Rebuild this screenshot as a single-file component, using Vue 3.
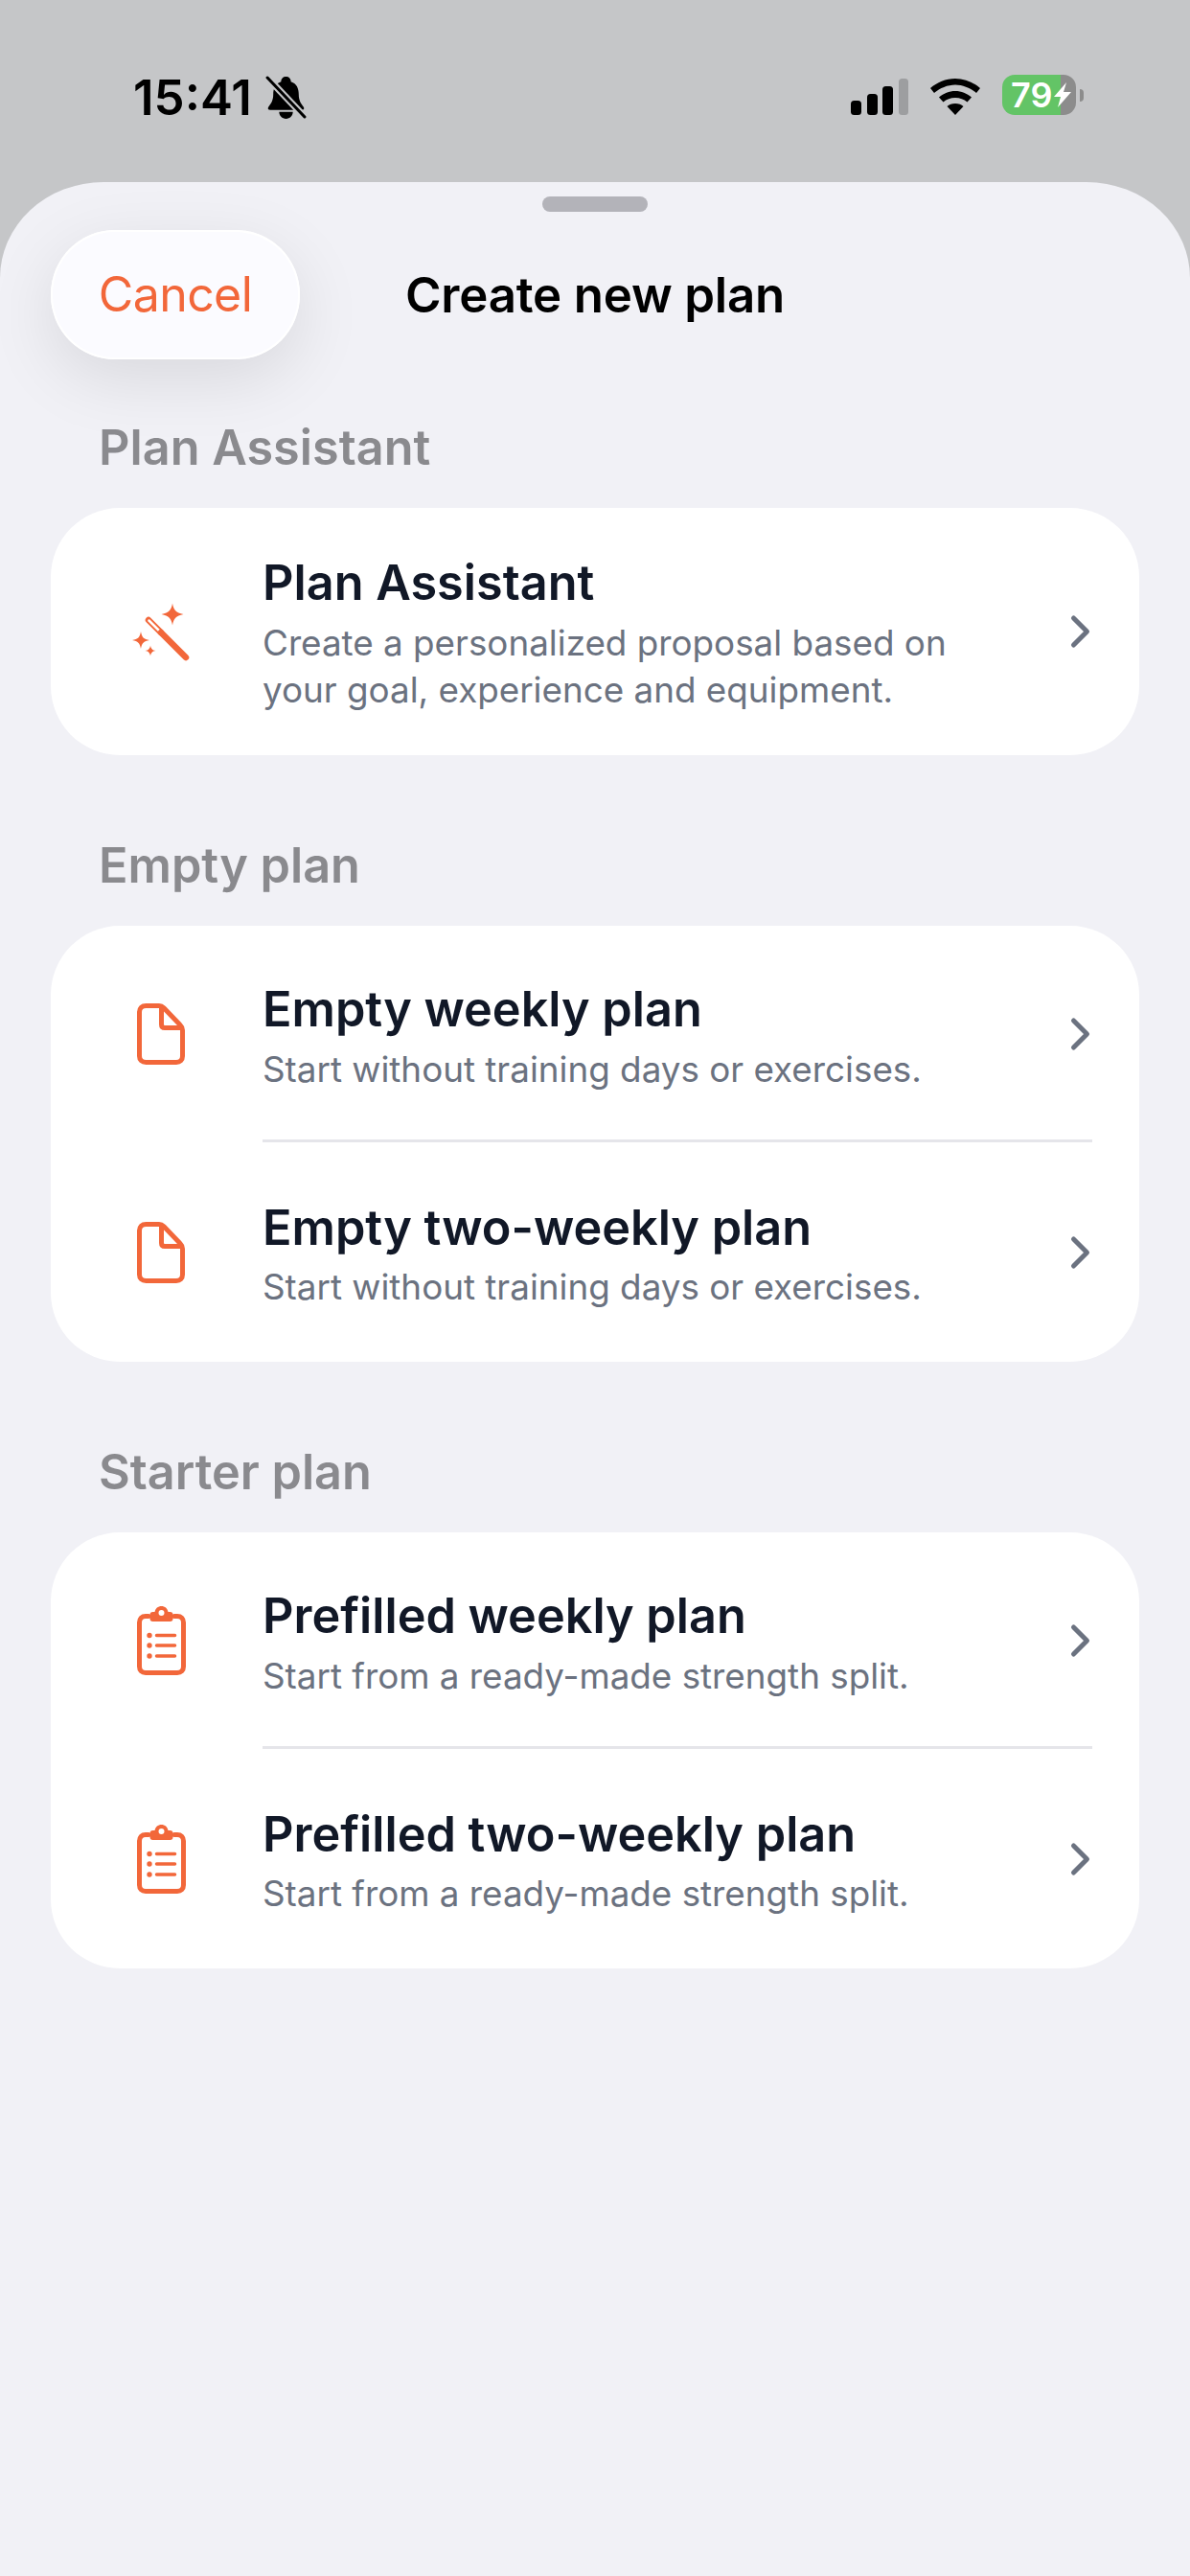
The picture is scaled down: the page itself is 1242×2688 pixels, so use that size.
<template>
  <div class="screen">
    <!-- status bar -->
    <div class="status-bar">
      <div class="status-left">
        <span class="time">15:41</span>
        <svg class="bell" width="43" height="45" viewBox="0 0 42 44">
          <path d="M21 1c3 0 5 2 5 5 6 2 8 7 8 13 0 6 2 9 5 13 1 2 0 3-2 3H5c-2 0-3-1-2-3 3-4 5-7 5-13 0-6 2-11 8-13 0-3 2-5 5-5z" fill="#000" />
          <path d="M14 37h14c0 4-3 7-7 7s-7-3-7-7z" fill="#000" />
          <path d="M3 3l37 39" stroke="#c5c6c8" stroke-width="7" />
          <path d="M2 2l38 40" stroke="#000" stroke-width="3" stroke-linecap="round" />
        </svg>
      </div>
      <div class="status-right">
        <svg width="60" height="38" viewBox="0 0 60 38">
          <rect x="0" y="23" width="11" height="15" rx="3.500" fill="#000" />
          <rect x="17" y="16" width="11" height="22" rx="3.500" fill="#000" />
          <rect x="33" y="8" width="11" height="30" rx="3.500" fill="#000" />
          <rect x="50" y="0" width="10" height="38" rx="3.500" fill="#9d9ea0" />
        </svg>
        <svg width="52" height="38" viewBox="0 0 52 38">
          <path d="M26 0c10 0 19 4 26 10l-4 5C42 10 34 6.500 26 6.500S10 10 4 15L0 10C7 4 16 0 26 0z" fill="#000" />
          <path d="M26 13c6.500 0 12 2.500 17 6.500l-4.500 5C35 21.500 31 20 26 20s-9 1.500-12.500 4.500L9 19.500C14 15.500 19.500 13 26 13z" fill="#000" />
          <path d="M26 26c3.500 0 6.500 1 8.500 3L26 38l-8.500-9c2-2 5-3 8.500-3z" fill="#000" />
        </svg>
        <div class="battery">
          <div class="battery-body">
            <span class="battery-level">79</span>
            <svg class="bolt" width="18" height="26" viewBox="0 0 18 26">
              <path d="M13 0L0 15h7l-3 11L18 10h-8z" fill="#fff" />
            </svg>
          </div>
          <div class="battery-tip"></div>
        </div>
      </div>
    </div>

    <div class="sheet">
      <div class="grabber"></div>

      <div class="sheet-header">
        <div class="cancel">Cancel</div>
        <div class="sheet-title">Create new plan</div>
        <div></div>
      </div>

      <section v-for="group in groups" :key="group.label" class="group">
        <div class="group-label">{{ group.label }}</div>
        <div class="card">
          <template v-for="(row, i) in group.rows" :key="row.title">
            <div v-if="i > 0" class="divider"></div>
            <div class="row">
              <svg class="row-icon" width="72" height="72" viewBox="0 0 72 72">
                <g v-if="group.icon === 'wand'" fill="#f2673a">
                  <path d="M48 6.500c1.200 7 3.500 10 11.500 11.500-8 1.500-10.300 4.500-11.500 11.500-1.200-7-3.500-10-11.500-11.500 8-1.500 10.300-4.500 11.500-11.500z" />
                  <path d="M15 36c1 6 3 8 9 9-6 1-8 3-9 9-1-6-3-8-9-9 6-1 8-3 9-9z" />
                  <path d="M25 50.500c.6 3.500 2 4.900 5.500 5.500-3.500.6-4.900 2-5.500 5.500-.6-3.500-2-4.900-5.500-5.500 3.500-.6 4.900-2 5.500-5.500z" />
                  <path d="M23 24l13 13" stroke="#f2673a" stroke-width="6.500" stroke-linecap="round" />
                  <path d="M23.500 24.500l11 11" stroke="#fff" stroke-width="2.500" stroke-linecap="round" />
                  <path d="M36 37l26 26" stroke="#f2673a" stroke-width="6.500" stroke-linecap="round" />
                </g>
                <g v-else-if="group.icon === 'doc'" fill="none" stroke="#f2673a" stroke-width="5" stroke-linejoin="round">
                  <path d="M20.500 6.500H34c2 0 3.500.7 5 2.200L56 26.500c1.600 1.600 2.500 3.300 2.500 5.500v27c0 4-2.500 6.500-6.500 6.500H20.500c-4.500 0-7-2.500-7-6.500V13c0-4 2.500-6.500 7-6.500z" />
                  <path d="M36.500 7v19c0 2.500 1 3.500 3.500 3.500h18" />
                </g>
                <g v-else>
                  <path d="M23 10.500h-3c-4 0-6.500 2.500-6.500 6.500v46c0 4 2.500 6.500 6.500 6.500h33c4 0 6.500-2.500 6.500-6.500V17c0-4-2.500-6.500-6.500-6.500h-3" fill="none" stroke="#f2673a" stroke-width="5" stroke-linecap="round" />
                  <path fill-rule="evenodd" d="M36.500 0c3.500 0 6.300 2.200 7 6h2c2 0 3 1 3 3v4c0 2-1 3-3 3h-18c-2 0-3-1-3-3V9c0-2 1-3 3-3h2c.7-3.800 3.500-6 7-6zm0 4a3 3 0 1 0 0 6 3 3 0 0 0 0-6z" fill="#f2673a" />
                  <circle cx="24" cy="30.500" r="2.700" fill="#f2673a" />
                  <circle cx="24" cy="41" r="2.700" fill="#f2673a" />
                  <circle cx="24" cy="52" r="2.700" fill="#f2673a" />
                  <path d="M31.500 30.500h19M31.500 41h19M31.500 52h19" stroke="#f2673a" stroke-width="3.500" stroke-linecap="round" />
                </g>
              </svg>
              <div class="row-text">
                <div class="row-title">{{ row.title }}</div>
                <div class="row-desc">{{ row.desc }}</div>
              </div>
              <svg class="chevron" width="24" height="36" viewBox="0 0 24 36">
                <path d="M4.500 4l14 14-14 14" fill="none" stroke="#6b7280" stroke-width="5" stroke-linecap="round" stroke-linejoin="round" />
              </svg>
            </div>
          </template>
        </div>
      </section>
    </div>
  </div>
</template>

<script setup>
const emptyDesc = 'Start without training days or exercises.'
const starterDesc = 'Start from a ready-made strength split.'

const groups = [
  {
    label: 'Plan Assistant',
    icon: 'wand',
    rows: [
      {
        title: 'Plan Assistant',
        desc: 'Create a personalized proposal based on your goal, experience and equipment.'
      }
    ]
  },
  {
    label: 'Empty plan',
    icon: 'doc',
    rows: [
      { title: 'Empty weekly plan', desc: emptyDesc },
      { title: 'Empty two-weekly plan', desc: emptyDesc }
    ]
  },
  {
    label: 'Starter plan',
    icon: 'clipboard',
    rows: [
      { title: 'Prefilled weekly plan', desc: starterDesc },
      { title: 'Prefilled two-weekly plan', desc: starterDesc }
    ]
  }
]
</script>

<style>
html,
body {
  margin: 0;
  background: #c5c6c8;
}
</style>

<style scoped>
.screen {
  width: 1242px;
  height: 2688px;
  overflow: hidden;
  display: flex;
  flex-direction: column;
  background: #c5c6c8;
  font-family: Inter, "Liberation Sans", sans-serif;
}

.status-bar {
  height: 190px;
  flex-shrink: 0;
  display: flex;
  justify-content: space-between;
  align-items: flex-start;
  padding: 79px 111px 0 139px;
  box-sizing: border-box;
}

.status-left {
  display: flex;
  align-items: center;
  gap: 14px;
}

.time {
  font-size: 51px;
  font-weight: 600;
  line-height: 42px;
  color: #000;
}

.status-right {
  display: flex;
  align-items: flex-end;
  gap: 23px;
  height: 41px;
}

.battery {
  display: flex;
  align-items: center;
  gap: 4px;
  height: 42px;
}

.battery-body {
  width: 77px;
  height: 42px;
  border-radius: 13px;
  background: linear-gradient(90deg, #63c466 0 61px, #8c8c8c 61px);
  display: flex;
  align-items: center;
  padding-left: 9px;
  box-sizing: border-box;
  gap: 2px;
}

.battery-level {
  font-size: 36px;
  font-weight: 600;
  line-height: 42px;
  color: #fff;
}

.battery-tip {
  width: 4px;
  height: 13px;
  background: #8c8c8c;
  border-radius: 0 6px 6px 0;
}

.sheet {
  flex: 1;
  background: #f1f1f6;
  border-radius: 108px 108px 0 0 / 100px 100px 0 0;
  padding: 15px 53px 0;
}

.grabber {
  width: 110px;
  height: 16px;
  border-radius: 8px;
  background: #b3b3b9;
  margin: 0 auto 19px;
}

.sheet-header {
  display: grid;
  grid-template-columns: 1fr auto 1fr;
  align-items: center;
  margin-bottom: 62px;
}

.cancel {
  width: 260px;
  height: 135px;
  border-radius: 67px;
  background: #fbfbff;
  box-shadow: inset 0 0 0 2px #fff, 0 20px 70px rgba(0, 0, 0, 0.1);
  color: #f2673a;
  font-size: 50px;
  letter-spacing: -0.6px;
  line-height: 135px;
  text-align: center;
}

.sheet-title {
  font-size: 51px;
  letter-spacing: -0.2px;
  font-weight: 600;
  color: #000;
}

.group {
  margin-bottom: 85px;
}

.group-label {
  font-size: 50.400px;
  font-weight: 600;
  line-height: 60px;
  color: #8a8a8e;
  padding-left: 50px;
  margin-bottom: 33px;
}

.card {
  background: #fff;
  border-radius: 72px;
}

.row {
  display: flex;
  align-items: center;
  padding: 48px 49px 44px 79px;
  min-height: 227.500px;
  box-sizing: border-box;
}

.row-icon,
.chevron {
  flex-shrink: 0;
  margin-top: -4px;
}

.row-text {
  flex: 1;
  margin-left: 70px;
  margin-right: 60px;
}

.row-title {
  font-size: 50.400px;
  font-weight: 600;
  line-height: 60px;
  color: #111827;
  margin-bottom: 7.500px;
}

.row-desc {
  font-size: 36.800px;
  line-height: 49px;
  color: #6b7280;
}

/* sits over the bottom edge of the row above */
.divider {
  height: 3px;
  background: #e5e5ea;
  margin: -4px 49px 1px 221px;
}
</style>
